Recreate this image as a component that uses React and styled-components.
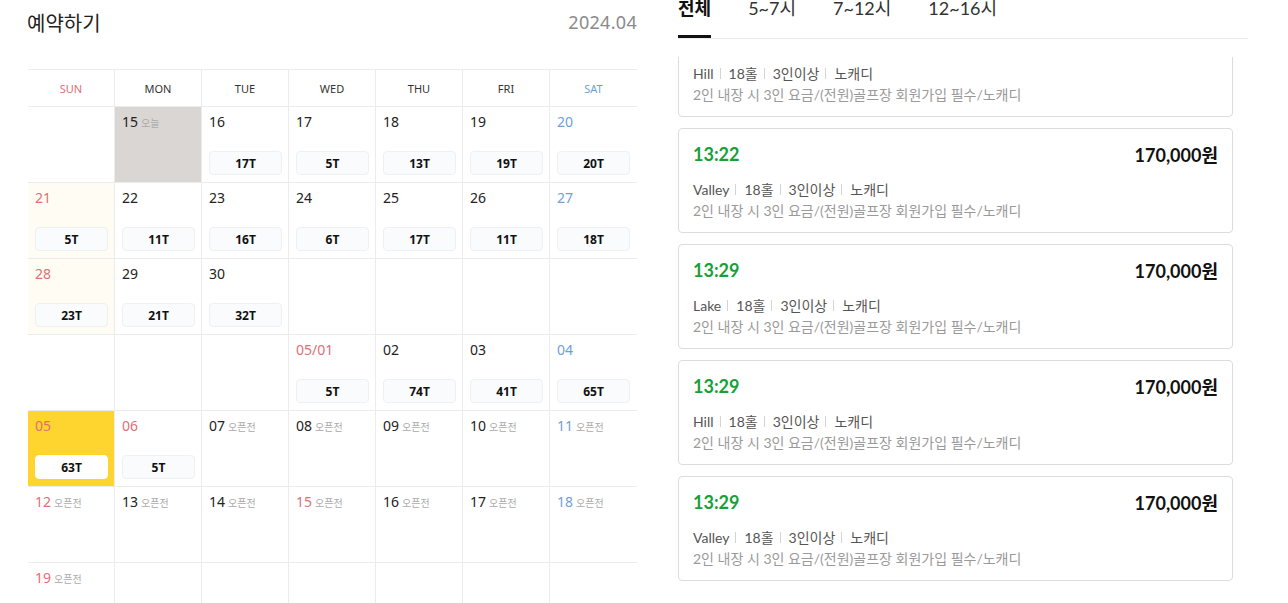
import React, { useEffect, useRef } from "react";
import styled, { createGlobalStyle } from "styled-components";

const GlobalStyle = createGlobalStyle`
  html, body {
    margin: 0;
    padding: 0;
    background: #fff;
    overflow: hidden;
  }
  * { box-sizing: border-box; }
`;

const red = "#e06f76";
const blue = "#6f9fd6";
const cardFont = `Lato, "Noto Sans CJK KR", sans-serif`;
const calFont = `"Noto Sans", "Noto Sans CJK KR", sans-serif`;

const WEEK = ["SUN", "MON", "TUE", "WED", "THU", "FRI", "SAT"];

// tone: red / blue / null ; bg: today / sunday / selected
const ROWS = [
  [null, { d: "15", bg: "today", note: "오늘" }, { d: "16", t: "17T" }, { d: "17", t: "5T" }, { d: "18", t: "13T" }, { d: "19", t: "19T" }, { d: "20", t: "20T", tone: "blue" }],
  [{ d: "21", t: "5T", tone: "red", bg: "sunday" }, { d: "22", t: "11T" }, { d: "23", t: "16T" }, { d: "24", t: "6T" }, { d: "25", t: "17T" }, { d: "26", t: "11T" }, { d: "27", t: "18T", tone: "blue" }],
  [{ d: "28", t: "23T", tone: "red", bg: "sunday" }, { d: "29", t: "21T" }, { d: "30", t: "32T" }, null, null, null, null],
  [null, null, null, { d: "05/01", t: "5T", tone: "red" }, { d: "02", t: "74T" }, { d: "03", t: "41T" }, { d: "04", t: "65T", tone: "blue" }],
  [{ d: "05", t: "63T", tone: "red", bg: "selected" }, { d: "06", t: "5T", tone: "red" }, { d: "07", note: "오픈전" }, { d: "08", note: "오픈전" }, { d: "09", note: "오픈전" }, { d: "10", note: "오픈전" }, { d: "11", note: "오픈전", tone: "blue" }],
  [{ d: "12", note: "오픈전", tone: "red" }, { d: "13", note: "오픈전" }, { d: "14", note: "오픈전" }, { d: "15", note: "오픈전", tone: "red" }, { d: "16", note: "오픈전" }, { d: "17", note: "오픈전" }, { d: "18", note: "오픈전", tone: "blue" }],
  [{ d: "19", note: "오픈전", tone: "red" }, null, null, null, null, null, null],
];

const TEE_TIMES = [
  { time: "13:15", course: "Hill" },
  { time: "13:22", course: "Valley" },
  { time: "13:29", course: "Lake" },
  { time: "13:29", course: "Hill" },
  { time: "13:29", course: "Valley" },
];

const TABS = ["전체", "5~7시", "7~12시", "12~16시"];

const Page = styled.div`
  display: flex;
  gap: 41px;
  padding-left: 28px;
  height: 603px;
`;

const LeftPanel = styled.section`
  width: 609px;
  flex-shrink: 0;
`;

const TitleRow = styled.div`
  display: flex;
  justify-content: space-between;
  align-items: center;
  height: 44px;
  margin-bottom: 25px;
`;

const Title = styled.h2`
  margin: 0 0 0 -1px;
  font: 400 20px ${calFont};
  color: #222;
`;

const MonthLabel = styled.span`
  font: 400 18px ${calFont};
  color: #8a8a8a;
  letter-spacing: 0.3px;
`;

const Grid = styled.div`
  display: grid;
  grid-template-columns: repeat(7, 87px);
  border-top: 1px solid #ececec;
`;

const HeadCell = styled.div`
  height: 37px;
  display: flex;
  align-items: center;
  justify-content: center;
  font: 400 11px ${calFont};
  color: ${(p) => (p.$tone === "red" ? red : p.$tone === "blue" ? blue : "#333")};
  border-bottom: 1px solid #ececec;
  border-right: ${(p) => (p.$last ? "none" : "1px solid #ececec")};
`;

const cellBg = { today: "#d9d6d3", sunday: "#fffdf3", selected: "#fed42f" };

const DayCell = styled.div`
  height: 76px;
  padding: 5px 6px 7px 7px;
  display: flex;
  flex-direction: column;
  justify-content: space-between;
  background: ${(p) => cellBg[p.$bg] || "#fff"};
  border-bottom: 1px solid #ececec;
  border-right: ${(p) => (p.$last ? "none" : "1px solid #ececec")};
`;

const DateLine = styled.div`
  display: flex;
  align-items: baseline;
  gap: 3px;
`;

const DateNum = styled.span`
  font: 400 14px ${calFont};
  color: ${(p) => (p.$tone === "red" ? red : p.$tone === "blue" ? blue : "#222")};
  line-height: 20px;
`;

const Note = styled.span`
  font: 400 10px ${calFont};
  color: #aaa;
`;

const Badge = styled.div`
  height: 24px;
  width: 73px;
  display: flex;
  align-items: center;
  justify-content: center;
  border-radius: 4px;
  background: ${(p) => (p.$white ? "#fff" : "#fafbfc")};
  border: 1px solid ${(p) => (p.$white ? "#fff" : "#eef0f3")};
  font: 700 12px ${calFont};
  color: #111;
`;

const RightPanel = styled.section`
  width: 570px;
  flex-shrink: 0;
  display: flex;
  flex-direction: column;
`;

const TabBar = styled.nav`
  display: flex;
  align-items: flex-start;
  gap: 37px;
  height: 39px;
  border-bottom: 1px solid #ececec;
`;

const Tab = styled.span`
  display: block;
  height: 38px;
  font: ${(p) => (p.$active ? 700 : 400)} 18px ${cardFont};
  line-height: 16px;
  color: ${(p) => (p.$active ? "#111" : "#333")};
  border-bottom: 3px solid ${(p) => (p.$active ? "#111" : "transparent")};
  cursor: pointer;
`;

const ScrollArea = styled.div`
  margin-top: 18px;
  flex: 1;
  overflow: hidden;
  padding-right: 15px;
`;

const CardList = styled.div`
  display: flex;
  flex-direction: column;
  gap: 11px;
  padding-bottom: 30px;
`;

const Card = styled.article`
  height: 105px;
  border: 1px solid #dcdcdc;
  border-radius: 4px;
  padding: 14px 14px 11px 14px;
  font-family: ${cardFont};
`;

const CardTop = styled.div`
  display: flex;
  justify-content: space-between;
  align-items: center;
  height: 22px;
`;

const Time = styled.span`
  font-weight: 700;
  font-size: 18px;
  color: #18a038;
`;

const Price = styled.span`
  font-weight: 700;
  font-size: 18px;
  color: #111;
`;

const InfoRow = styled.div`
  margin-top: 14px;
  height: 20px;
  display: flex;
  align-items: center;
  font-size: 14px;
  color: #555;
`;

const Sep = styled.i`
  display: inline-block;
  width: 1px;
  height: 11px;
  background: #d4d4d4;
  margin: 0 8px 0 6px;
`;

const Desc = styled.div`
  margin-top: 2px;
  height: 20px;
  line-height: 20px;
  font-size: 14px;
  color: #9a9a9a;
`;

function CalendarCell({ cell, last }) {
  if (!cell) return <DayCell $last={last} />;
  return (
    <DayCell $bg={cell.bg} $last={last}>
      <DateLine>
        <DateNum $tone={cell.tone}>{cell.d}</DateNum>
        {cell.note && <Note>{cell.note}</Note>}
      </DateLine>
      {cell.t && <Badge $white={cell.bg === "selected"}>{cell.t}</Badge>}
    </DayCell>
  );
}

export default function App() {
  const listRef = useRef(null);

  useEffect(() => {
    if (listRef.current) listRef.current.scrollTop = 45;
  }, []);

  return (
    <>
      <GlobalStyle />
      <Page>
        <LeftPanel>
          <TitleRow>
            <Title>예약하기</Title>
            <MonthLabel>2024.04</MonthLabel>
          </TitleRow>
          <Grid>
            {WEEK.map((w, i) => (
              <HeadCell key={w} $tone={i === 0 ? "red" : i === 6 ? "blue" : null} $last={i === 6}>
                {w}
              </HeadCell>
            ))}
            {ROWS.map((row, r) =>
              row.map((cell, c) => <CalendarCell key={`${r}-${c}`} cell={cell} last={c === 6} />)
            )}
          </Grid>
        </LeftPanel>

        <RightPanel>
          <TabBar>
            {TABS.map((t, i) => (
              <Tab key={t} $active={i === 0}>
                {t}
              </Tab>
            ))}
          </TabBar>
          <ScrollArea ref={listRef}>
            <CardList>
              {TEE_TIMES.map((item, i) => (
                <Card key={i}>
                  <CardTop>
                    <Time>{item.time}</Time>
                    <Price>170,000원</Price>
                  </CardTop>
                  <InfoRow>
                    {item.course}
                    <Sep />
                    18홀
                    <Sep />
                    3인이상
                    <Sep />
                    노캐디
                  </InfoRow>
                  <Desc>2인 내장 시 3인 요금/(전원)골프장 회원가입 필수/노캐디</Desc>
                </Card>
              ))}
            </CardList>
          </ScrollArea>
        </RightPanel>
      </Page>
    </>
  );
}
